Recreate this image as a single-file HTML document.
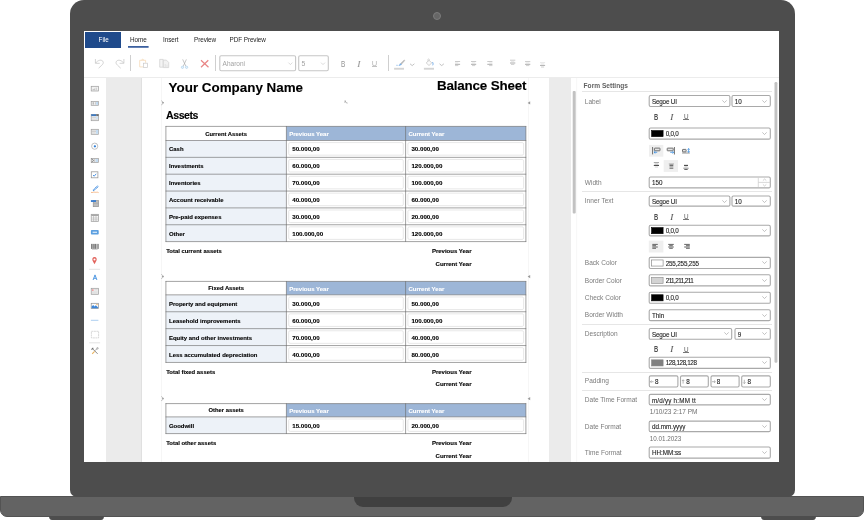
<!DOCTYPE html><html><head><meta charset="utf-8"><title>Form Designer</title><style>
*{box-sizing:border-box;margin:0;padding:0}
html,body{width:864px;height:520px;overflow:hidden;background:#fff}
body{position:relative;font-family:"Liberation Sans",sans-serif;color:#000}
.a{position:absolute}
.t{position:absolute;white-space:nowrap;line-height:1}
.frame{left:70px;top:0;width:725px;height:497px;background:#4d4d4d;border-radius:14px 14px 7px 7px}
.base{left:0;top:496px;width:864px;height:20.7px;background:#636363;border:1px solid #535353;border-radius:0 0 7px 7px}
.notch{left:354px;top:496.5px;width:158px;height:10.3px;background:#404040;border-radius:0 0 9px 9px}
.foot{top:516px;height:4px;background:#4d4d4d}
.cam{left:432.6px;top:12px;width:8.2px;height:8.2px;border-radius:50%;background:#666;border:1px solid #7c7c7c}
.lbl{position:absolute;white-space:nowrap;line-height:1;font-size:6.55px;color:#7b7b7b}
.val{position:absolute;white-space:nowrap;line-height:1;font-size:6.3px;color:#222;-webkit-text-stroke:0.1px #222}
.sep{position:absolute;height:1px;background:#e6e6e6;left:582px;width:190px}
.b{font-weight:bold;-webkit-text-stroke:0.12px currentColor}
</style></head><body><div id="root" style="position:absolute;left:0;top:0;width:864px;height:520px;will-change:transform">
<div class="a base"></div>
<div class="a foot" style="left:48.5px;width:55px;border-radius:0 0 3px 3px / 0 0 4px 4px"></div>
<div class="a foot" style="left:760.5px;width:55px;border-radius:0 0 3px 3px / 0 0 4px 4px"></div>
<div class="a frame"></div>
<div class="a notch"></div>
<div class="a cam"></div>
<div class="a" style="left:84px;top:31px;width:695px;height:431px;background:#fff"></div>
<div class="a" style="left:85.4px;top:32px;width:35.8px;height:15.6px;background:#1f4a8b"></div>
<div class="t" style="left:98.6px;top:36.7px;font-size:6.3px;color:#fff">File</div>
<div class="t" style="left:130px;top:36.6px;font-size:6.35px;letter-spacing:-0.08px;color:#262626">Home</div>
<div class="t" style="left:163px;top:36.6px;font-size:6.35px;letter-spacing:-0.08px;color:#262626">Insert</div>
<div class="t" style="left:194px;top:36.6px;font-size:6.35px;letter-spacing:-0.08px;color:#262626">Preview</div>
<div class="t" style="left:229.6px;top:36.6px;font-size:6.35px;letter-spacing:-0.08px;color:#262626">PDF Preview</div>
<svg class="a" style="left:0;top:0" width="864" height="520" viewBox="0 0 864 520"><rect x="128" y="46.1" width="20.6" height="1.6" fill="#274f95"/></svg>
<div class="a" style="left:84px;top:77px;width:695px;height:1px;background:#ececec"></div>
<div class="a" style="left:130.2px;top:55.3px;width:0.8px;height:16px;background:#cfcfcf"></div>
<div class="a" style="left:215.2px;top:55.3px;width:0.8px;height:16px;background:#cfcfcf"></div>
<div class="a" style="left:388.2px;top:55.3px;width:0.8px;height:16px;background:#cfcfcf"></div>
<svg class="a" style="left:0;top:0" width="864" height="520" viewBox="0 0 864 520"><rect x="219.80" y="55.70" width="75.80" height="15.00" rx="1.4" fill="#fff" stroke="#c6c6c6" stroke-width="1.1"/><rect x="298.70" y="55.70" width="29.60" height="15.00" rx="1.4" fill="#fff" stroke="#c6c6c6" stroke-width="1.1"/><rect x="649.20" y="95.50" width="80.70" height="11.00" rx="1.4" fill="#fff" stroke="#a9a9a9" stroke-width="1.1"/><rect x="732.00" y="95.50" width="38.30" height="11.00" rx="1.4" fill="#fff" stroke="#a9a9a9" stroke-width="1.1"/><rect x="649.20" y="128.00" width="121.10" height="11.10" rx="1.4" fill="#fff" stroke="#a9a9a9" stroke-width="1.1"/><rect x="649.20" y="177.00" width="121.10" height="10.90" rx="1.4" fill="#fff" stroke="#a9a9a9" stroke-width="1.1"/><rect x="649.20" y="196.00" width="80.70" height="10.10" rx="1.4" fill="#fff" stroke="#a9a9a9" stroke-width="1.1"/><rect x="732.00" y="196.00" width="38.30" height="10.10" rx="1.4" fill="#fff" stroke="#a9a9a9" stroke-width="1.1"/><rect x="649.20" y="225.30" width="121.10" height="10.60" rx="1.4" fill="#fff" stroke="#a9a9a9" stroke-width="1.1"/><rect x="649.20" y="257.40" width="121.10" height="11.10" rx="1.4" fill="#fff" stroke="#a9a9a9" stroke-width="1.1"/><rect x="649.20" y="274.80" width="121.10" height="11.10" rx="1.4" fill="#fff" stroke="#a9a9a9" stroke-width="1.1"/><rect x="649.20" y="292.20" width="121.10" height="11.10" rx="1.4" fill="#fff" stroke="#a9a9a9" stroke-width="1.1"/><rect x="649.20" y="309.80" width="121.10" height="10.80" rx="1.4" fill="#fff" stroke="#a9a9a9" stroke-width="1.1"/><rect x="649.20" y="328.50" width="82.50" height="10.80" rx="1.4" fill="#fff" stroke="#a9a9a9" stroke-width="1.1"/><rect x="735.00" y="328.50" width="35.30" height="10.80" rx="1.4" fill="#fff" stroke="#a9a9a9" stroke-width="1.1"/><rect x="649.20" y="357.30" width="121.10" height="11.10" rx="1.4" fill="#fff" stroke="#a9a9a9" stroke-width="1.1"/><rect x="649.30" y="375.90" width="28.60" height="11.10" rx="1.4" fill="#fff" stroke="#a9a9a9" stroke-width="1.1"/><rect x="680.50" y="375.90" width="27.80" height="11.10" rx="1.4" fill="#fff" stroke="#a9a9a9" stroke-width="1.1"/><rect x="711.00" y="375.90" width="28.10" height="11.10" rx="1.4" fill="#fff" stroke="#a9a9a9" stroke-width="1.1"/><rect x="741.70" y="375.90" width="28.60" height="11.10" rx="1.4" fill="#fff" stroke="#a9a9a9" stroke-width="1.1"/><rect x="649.20" y="394.40" width="121.10" height="10.50" rx="1.4" fill="#fff" stroke="#a9a9a9" stroke-width="1.1"/><rect x="649.20" y="421.10" width="121.10" height="10.50" rx="1.4" fill="#fff" stroke="#a9a9a9" stroke-width="1.1"/><rect x="649.20" y="447.00" width="121.10" height="11.10" rx="1.4" fill="#fff" stroke="#a9a9a9" stroke-width="1.1"/></svg>
<div class="t" style="left:222.6px;top:60.6px;font-size:6.5px;color:#a2a2a2">Aharoni</div>
<div class="t" style="left:301.6px;top:60.6px;font-size:6.8px;color:#a2a2a2">5</div>
<div class="t" style="left:340.70px;top:60px;font-size:9.2px;color:#939393;transform:scaleX(0.7);transform-origin:0 0">B</div>
<div class="t" style="left:356.90px;top:60px;font-size:8.8px;color:#9a9a9a;font-style:italic;font-family:'Liberation Serif',serif;transform:scaleX(1.25);transform-origin:0 0">I</div>
<div class="t" style="left:371.80px;top:60px;font-size:7.6px;color:#b8b8b8">U</div>
<div class="a" style="left:371.8px;top:66.4px;width:5.5px;height:0.9px;background:#c2c2c2"></div>
<svg class="a" style="left:0;top:0" width="864" height="520" viewBox="0 0 864 520"><path d="M95.4 59 V63.3 H99.7 M95.6 63.1 C97.6 60.2 101.2 59.3 102.8 61.2 C103.9 62.6 103 64 101.8 65.2 L98.6 68.2" fill="none" stroke="#c6c6c6" stroke-width="0.75"/><path d="M123.9 59 V63.3 H119.6 M123.7 63.1 C121.7 60.2 118.1 59.3 116.5 61.2 C115.4 62.6 116.3 64 117.5 65.2 L120.7 68.2" fill="none" stroke="#c6c6c6" stroke-width="0.75"/><path d="M143 66.9 H139.7 V60.3 H145.6 V62.8 M141.6 60.3 C141.6 58.9 143.7 58.9 143.7 60.3" fill="none" stroke="#f5d9b8" stroke-width="0.8"/><rect x="143.6" y="63.2" width="3.9" height="4.4" fill="#fff" stroke="#c9c9c9" stroke-width="0.7"/><path d="M159.7 59.4 H163.2 V67.2 H159.7 Z" fill="#f4f4f4" stroke="#d0d0d0" stroke-width="0.7"/><path d="M163.3 60.1 H166.4 L168.7 62.4 V67.6 H163.3 Z" fill="#f2f2f2" stroke="#cecece" stroke-width="0.7"/><path d="M165.2 64 V67.4 M167 64.8 V67.4" stroke="#d6d6d6" stroke-width="0.6"/><path d="M182.7 59.4 L185.9 66.3 M186.4 59.4 L183.2 66.3" stroke="#a8a8a8" stroke-width="0.65" fill="none"/><circle cx="182.5" cy="67.3" r="1.15" fill="#e8f2fb" stroke="#9fc9ea" stroke-width="0.6"/><circle cx="186.6" cy="67.3" r="1.15" fill="#e8f2fb" stroke="#9fc9ea" stroke-width="0.6"/><path d="M201 60.3 L208.5 67.2 M208.3 60.2 L201 67.3" stroke="#e98686" stroke-width="1.25" fill="none"/><path d="M288.4 62.6 L290.4 64.6 L292.4 62.6" fill="none" stroke="#c4c4c4" stroke-width="0.6"/><path d="M321 62.6 L323 64.6 L325 62.6" fill="none" stroke="#c4c4c4" stroke-width="0.6"/><path d="M401.2 64.6 L404.9 60.4 L404.2 59.9 L400.4 63.7 Z" fill="#b5b5b5" stroke="#b5b5b5" stroke-width="0.5"/><path d="M399 65.6 L401.3 64.7 L400.4 63.7 Z" fill="#74ade9" stroke="#74ade9" stroke-width="0.6"/><path d="M396 65.3 H398.2" stroke="#9cc4ee" stroke-width="0.7"/><rect x="394.1" y="67.8" width="9.9" height="1.9" fill="#d4d4d4"/><path d="M410 63.8 L412.2 65.6 L414.4 63.8" fill="none" stroke="#a2a2a2" stroke-width="0.65"/><path d="M426.2 62.9 L429 60.3 L431.8 62.9 L429 65.5 Z" fill="#fbfbfb" stroke="#c4c4c4" stroke-width="0.75"/><path d="M427.9 61.6 V59.5 C427.9 58.6 429.3 58.6 429.3 59.5 V60.6" fill="none" stroke="#c8c8c8" stroke-width="0.65"/><path d="M432.5 62.1 C433.2 63.2 433.2 64.4 432.7 65.3" fill="none" stroke="#74ade9" stroke-width="1.0"/><rect x="423.9" y="67.8" width="10.1" height="1.9" fill="#d4d4d4"/><path d="M439.5 63.8 L441.7 65.6 L443.9 63.8" fill="none" stroke="#a2a2a2" stroke-width="0.65"/><path d="M455 61.5 H460.1" stroke="#c4c4c4" stroke-width="0.9"/><path d="M455 62.9 H458.3" stroke="#dedede" stroke-width="0.7"/><path d="M455 64.3 H460.1" stroke="#aeaeae" stroke-width="1.0"/><path d="M455 65.6 H458.3" stroke="#c4c4c4" stroke-width="0.8"/><path d="M471 61.5 H476.2" stroke="#c4c4c4" stroke-width="0.9"/><path d="M472 62.9 H475.2" stroke="#dedede" stroke-width="0.7"/><path d="M471 64.3 H476.2" stroke="#aeaeae" stroke-width="1.0"/><path d="M472 65.6 H475.2" stroke="#c4c4c4" stroke-width="0.8"/><path d="M487.3 61.5 H492.4" stroke="#c4c4c4" stroke-width="0.9"/><path d="M489.1 62.9 H492.4" stroke="#dedede" stroke-width="0.7"/><path d="M487.3 64.3 H492.4" stroke="#aeaeae" stroke-width="1.0"/><path d="M489.1 65.6 H492.4" stroke="#c4c4c4" stroke-width="0.8"/><path d="M510 60.2 H515.3" stroke="#c4c4c4" stroke-width="0.9"/><path d="M511 61.6 H514.3" stroke="#dedede" stroke-width="0.7"/><path d="M510 63 H515.3" stroke="#aeaeae" stroke-width="1.0"/><path d="M511 64.4 H514.3" stroke="#c4c4c4" stroke-width="0.8"/><path d="M525 61.6 H530.3" stroke="#c4c4c4" stroke-width="0.9"/><path d="M526 63 H529.3" stroke="#dedede" stroke-width="0.7"/><path d="M525 64.3 H530.3" stroke="#aeaeae" stroke-width="1.0"/><path d="M526 65.6 H529.3" stroke="#c4c4c4" stroke-width="0.8"/><path d="M540 62.7 H545.1" stroke="#dedede" stroke-width="0.8"/><path d="M541 64 H544.1" stroke="#dedede" stroke-width="0.7"/><path d="M540 65.4 H545.1" stroke="#aeaeae" stroke-width="1.0"/><path d="M541 67 H544.1" stroke="#c4c4c4" stroke-width="0.8"/></svg>
<div class="a" style="left:106.3px;top:78px;width:35.5px;height:384px;background:#ebebeb;border-right:1px solid #e0e0e0"></div>
<div class="a" style="left:161.3px;top:78px;width:0.7px;height:384px;background:#f6f6f6"></div>
<div class="a" style="left:528.4px;top:78px;width:0.7px;height:384px;background:#f6f6f6"></div>
<div class="a" style="left:548.6px;top:78px;width:22.6px;height:384px;background:#ebebeb"></div>
<svg class="a" style="left:0;top:0" width="864" height="520" viewBox="0 0 864 520"><rect x="572.7" y="91" width="3" height="122.5" rx="1" fill="#c2c2c2"/><rect x="774.5" y="82" width="2.9" height="280.7" rx="1.2" fill="#c2c2c2"/><path d="M576.6 78 V462" stroke="#f4f4f4" stroke-width="0.7"/></svg>
<div class="t b" style="left:168.6px;top:80.6px;font-size:13.4px">Your Company Name</div>
<div class="t b" style="left:437px;top:78.6px;font-size:13.4px;letter-spacing:-0.18px">Balance Sheet</div>
<div class="t b" style="left:166px;top:110px;font-size:10.6px;letter-spacing:-0.45px">Assets</div>
<svg class="a" style="left:0;top:0" width="864" height="520" viewBox="0 0 864 520"><rect x="165.9" y="126.4" width="120.49999999999997" height="14.1" fill="#fff"/><rect x="286.4" y="126.4" width="239.5" height="14.1" fill="#9db6d7"/><rect x="165.9" y="140.5" width="120.49999999999997" height="101.10000000000001" fill="#edf2f8"/><rect x="286.4" y="140.5" width="239.5" height="101.10000000000001" fill="#fff"/><rect x="288.70" y="142.60" width="114.60" height="12.55" rx="1.4" fill="#fff" stroke="#dedede" stroke-width="0.7"/><rect x="407.90" y="142.60" width="115.70" height="12.55" rx="1.4" fill="#fff" stroke="#dedede" stroke-width="0.7"/><rect x="288.70" y="159.45" width="114.60" height="12.55" rx="1.4" fill="#fff" stroke="#dedede" stroke-width="0.7"/><rect x="407.90" y="159.45" width="115.70" height="12.55" rx="1.4" fill="#fff" stroke="#dedede" stroke-width="0.7"/><rect x="288.70" y="176.30" width="114.60" height="12.55" rx="1.4" fill="#fff" stroke="#dedede" stroke-width="0.7"/><rect x="407.90" y="176.30" width="115.70" height="12.55" rx="1.4" fill="#fff" stroke="#dedede" stroke-width="0.7"/><rect x="288.70" y="193.15" width="114.60" height="12.55" rx="1.4" fill="#fff" stroke="#dedede" stroke-width="0.7"/><rect x="407.90" y="193.15" width="115.70" height="12.55" rx="1.4" fill="#fff" stroke="#dedede" stroke-width="0.7"/><rect x="288.70" y="210.00" width="114.60" height="12.55" rx="1.4" fill="#fff" stroke="#dedede" stroke-width="0.7"/><rect x="407.90" y="210.00" width="115.70" height="12.55" rx="1.4" fill="#fff" stroke="#dedede" stroke-width="0.7"/><rect x="288.70" y="226.85" width="114.60" height="12.55" rx="1.4" fill="#fff" stroke="#dedede" stroke-width="0.7"/><rect x="407.90" y="226.85" width="115.70" height="12.55" rx="1.4" fill="#fff" stroke="#dedede" stroke-width="0.7"/><path d="M165.59 126.40 H526.21" stroke="#6a6a6a" stroke-width="0.62"/><path d="M165.59 140.50 H526.21" stroke="#6a6a6a" stroke-width="0.62"/><path d="M165.59 157.35 H526.21" stroke="#6a6a6a" stroke-width="0.62"/><path d="M165.59 174.20 H526.21" stroke="#6a6a6a" stroke-width="0.62"/><path d="M165.59 191.05 H526.21" stroke="#6a6a6a" stroke-width="0.62"/><path d="M165.59 207.90 H526.21" stroke="#6a6a6a" stroke-width="0.62"/><path d="M165.59 224.75 H526.21" stroke="#6a6a6a" stroke-width="0.62"/><path d="M165.59 241.60 H526.21" stroke="#6a6a6a" stroke-width="0.62"/><path d="M165.90 126.09 V241.91" stroke="#6a6a6a" stroke-width="0.62"/><path d="M286.40 126.09 V241.91" stroke="#6a6a6a" stroke-width="0.62"/><path d="M405.60 126.09 V241.91" stroke="#6a6a6a" stroke-width="0.62"/><path d="M525.90 126.09 V241.91" stroke="#6a6a6a" stroke-width="0.62"/></svg>
<div class="t b" style="left:165.90px;top:132px;font-size:5.85px;width:120.49999999999997px;text-align:center">Current Assets</div>
<div class="t b" style="left:289.20px;top:131px;font-size:6px;color:#fff">Previous Year</div>
<div class="t b" style="left:408.40px;top:131px;font-size:6px;color:#fff">Current Year</div>
<div class="t b" style="left:169.00px;top:147px;font-size:5.95px;">Cash</div>
<div class="t b" style="left:292.20px;top:146px;font-size:6.2px;">50.000,00</div>
<div class="t b" style="left:411.40px;top:146px;font-size:6.2px;">30.000,00</div>
<div class="t b" style="left:169.00px;top:164px;font-size:5.95px;">Investments</div>
<div class="t b" style="left:292.20px;top:163px;font-size:6.2px;">60.000,00</div>
<div class="t b" style="left:411.40px;top:163px;font-size:6.2px;">120.000,00</div>
<div class="t b" style="left:169.00px;top:181px;font-size:5.95px;">Inventories</div>
<div class="t b" style="left:292.20px;top:180px;font-size:6.2px;">70.000,00</div>
<div class="t b" style="left:411.40px;top:180px;font-size:6.2px;">100.000,00</div>
<div class="t b" style="left:169.00px;top:198px;font-size:5.95px;">Account receivable</div>
<div class="t b" style="left:292.20px;top:197px;font-size:6.2px;">40.000,00</div>
<div class="t b" style="left:411.40px;top:197px;font-size:6.2px;">60.000,00</div>
<div class="t b" style="left:169.00px;top:215px;font-size:5.95px;">Pre-paid expenses</div>
<div class="t b" style="left:292.20px;top:214px;font-size:6.2px;">30.000,00</div>
<div class="t b" style="left:411.40px;top:214px;font-size:6.2px;">20.000,00</div>
<div class="t b" style="left:169.00px;top:232px;font-size:5.95px;">Other</div>
<div class="t b" style="left:292.20px;top:231px;font-size:6.2px;">100.000,00</div>
<div class="t b" style="left:411.40px;top:231px;font-size:6.2px;">120.000,00</div>
<div class="t b" style="left:166.20px;top:249px;font-size:5.9px;">Total current assets</div>
<div class="t b" style="right:392.50px;top:248px;font-size:6px;">Previous Year</div>
<div class="t b" style="right:392.50px;top:261px;font-size:6px;">Current Year</div>
<svg class="a" style="left:0;top:0" width="864" height="520" viewBox="0 0 864 520"><rect x="165.9" y="281.4" width="120.49999999999997" height="13.45" fill="#fff"/><rect x="286.4" y="281.4" width="239.5" height="13.45" fill="#9db6d7"/><rect x="165.9" y="294.84999999999997" width="120.49999999999997" height="67.6" fill="#edf2f8"/><rect x="286.4" y="294.84999999999997" width="239.5" height="67.6" fill="#fff"/><rect x="288.70" y="296.95" width="114.60" height="12.60" rx="1.4" fill="#fff" stroke="#dedede" stroke-width="0.7"/><rect x="407.90" y="296.95" width="115.70" height="12.60" rx="1.4" fill="#fff" stroke="#dedede" stroke-width="0.7"/><rect x="288.70" y="313.85" width="114.60" height="12.60" rx="1.4" fill="#fff" stroke="#dedede" stroke-width="0.7"/><rect x="407.90" y="313.85" width="115.70" height="12.60" rx="1.4" fill="#fff" stroke="#dedede" stroke-width="0.7"/><rect x="288.70" y="330.75" width="114.60" height="12.60" rx="1.4" fill="#fff" stroke="#dedede" stroke-width="0.7"/><rect x="407.90" y="330.75" width="115.70" height="12.60" rx="1.4" fill="#fff" stroke="#dedede" stroke-width="0.7"/><rect x="288.70" y="347.65" width="114.60" height="12.60" rx="1.4" fill="#fff" stroke="#dedede" stroke-width="0.7"/><rect x="407.90" y="347.65" width="115.70" height="12.60" rx="1.4" fill="#fff" stroke="#dedede" stroke-width="0.7"/><path d="M165.59 281.40 H526.21" stroke="#6a6a6a" stroke-width="0.62"/><path d="M165.59 294.85 H526.21" stroke="#6a6a6a" stroke-width="0.62"/><path d="M165.59 311.75 H526.21" stroke="#6a6a6a" stroke-width="0.62"/><path d="M165.59 328.65 H526.21" stroke="#6a6a6a" stroke-width="0.62"/><path d="M165.59 345.55 H526.21" stroke="#6a6a6a" stroke-width="0.62"/><path d="M165.59 362.45 H526.21" stroke="#6a6a6a" stroke-width="0.62"/><path d="M165.90 281.09 V362.76" stroke="#6a6a6a" stroke-width="0.62"/><path d="M286.40 281.09 V362.76" stroke="#6a6a6a" stroke-width="0.62"/><path d="M405.60 281.09 V362.76" stroke="#6a6a6a" stroke-width="0.62"/><path d="M525.90 281.09 V362.76" stroke="#6a6a6a" stroke-width="0.62"/></svg>
<div class="t b" style="left:165.90px;top:286px;font-size:5.85px;width:120.49999999999997px;text-align:center">Fixed Assets</div>
<div class="t b" style="left:289.20px;top:286px;font-size:6px;color:#fff">Previous Year</div>
<div class="t b" style="left:408.40px;top:286px;font-size:6px;color:#fff">Current Year</div>
<div class="t b" style="left:169.00px;top:302px;font-size:5.95px;">Property and equipment</div>
<div class="t b" style="left:292.20px;top:301px;font-size:6.2px;">30.000,00</div>
<div class="t b" style="left:411.40px;top:301px;font-size:6.2px;">50.000,00</div>
<div class="t b" style="left:169.00px;top:319px;font-size:5.95px;">Leasehold improvements</div>
<div class="t b" style="left:292.20px;top:318px;font-size:6.2px;">60.000,00</div>
<div class="t b" style="left:411.40px;top:318px;font-size:6.2px;">100.000,00</div>
<div class="t b" style="left:169.00px;top:336px;font-size:5.95px;">Equity and other investments</div>
<div class="t b" style="left:292.20px;top:335px;font-size:6.2px;">70.000,00</div>
<div class="t b" style="left:411.40px;top:335px;font-size:6.2px;">40.000,00</div>
<div class="t b" style="left:169.00px;top:353px;font-size:5.95px;">Less accumulated depreciation</div>
<div class="t b" style="left:292.20px;top:352px;font-size:6.2px;">40.000,00</div>
<div class="t b" style="left:411.40px;top:352px;font-size:6.2px;">80.000,00</div>
<div class="t b" style="left:166.20px;top:370px;font-size:5.9px;">Total fixed assets</div>
<div class="t b" style="right:392.50px;top:369px;font-size:6px;">Previous Year</div>
<div class="t b" style="right:392.50px;top:381px;font-size:6px;">Current Year</div>
<svg class="a" style="left:0;top:0" width="864" height="520" viewBox="0 0 864 520"><rect x="165.9" y="403.6" width="120.49999999999997" height="13.3" fill="#fff"/><rect x="286.4" y="403.6" width="239.5" height="13.3" fill="#9db6d7"/><rect x="165.9" y="416.90000000000003" width="120.49999999999997" height="16.7" fill="#edf2f8"/><rect x="286.4" y="416.90000000000003" width="239.5" height="16.7" fill="#fff"/><rect x="288.70" y="419.00" width="114.60" height="12.40" rx="1.4" fill="#fff" stroke="#dedede" stroke-width="0.7"/><rect x="407.90" y="419.00" width="115.70" height="12.40" rx="1.4" fill="#fff" stroke="#dedede" stroke-width="0.7"/><path d="M165.59 403.60 H526.21" stroke="#6a6a6a" stroke-width="0.62"/><path d="M165.59 416.90 H526.21" stroke="#6a6a6a" stroke-width="0.62"/><path d="M165.59 433.60 H526.21" stroke="#6a6a6a" stroke-width="0.62"/><path d="M165.90 403.29 V433.91" stroke="#6a6a6a" stroke-width="0.62"/><path d="M286.40 403.29 V433.91" stroke="#6a6a6a" stroke-width="0.62"/><path d="M405.60 403.29 V433.91" stroke="#6a6a6a" stroke-width="0.62"/><path d="M525.90 403.29 V433.91" stroke="#6a6a6a" stroke-width="0.62"/></svg>
<div class="t b" style="left:165.90px;top:408px;font-size:5.85px;width:120.49999999999997px;text-align:center">Other assets</div>
<div class="t b" style="left:289.20px;top:408px;font-size:6px;color:#fff">Previous Year</div>
<div class="t b" style="left:408.40px;top:408px;font-size:6px;color:#fff">Current Year</div>
<div class="t b" style="left:169.00px;top:424px;font-size:5.95px;">Goodwill</div>
<div class="t b" style="left:292.20px;top:423px;font-size:6.2px;">15.000,00</div>
<div class="t b" style="left:411.40px;top:423px;font-size:6.2px;">20.000,00</div>
<div class="t b" style="left:166.20px;top:441px;font-size:5.9px;">Total other assets</div>
<div class="t b" style="right:392.50px;top:440px;font-size:6px;">Previous Year</div>
<div class="t b" style="right:392.50px;top:453px;font-size:6px;">Current Year</div>
<svg class="a" style="left:0;top:0" width="864" height="520" viewBox="0 0 864 520"><path d="M161.2 100.6 L163.9 102.8 L161.2 105.0" fill="none" stroke="#9a9a9a" stroke-width="0.6"/><path d="M162.2 102.1 L164 102.8 L162.2 103.5 Z" fill="#8a8a8a"/><path d="M530.2 101.3 L527.6 102.89999999999999 L530.2 104.5 Z" fill="#9a9a9a"/><path d="M161.2 274.3 L163.9 276.5 L161.2 278.7" fill="none" stroke="#9a9a9a" stroke-width="0.6"/><path d="M162.2 275.8 L164 276.5 L162.2 277.2 Z" fill="#8a8a8a"/><path d="M530.2 275.0 L527.6 276.6 L530.2 278.2 Z" fill="#9a9a9a"/><path d="M161.2 396.40000000000003 L163.9 398.6 L161.2 400.8" fill="none" stroke="#9a9a9a" stroke-width="0.6"/><path d="M162.2 397.90000000000003 L164 398.6 L162.2 399.3 Z" fill="#8a8a8a"/><path d="M530.2 397.1 L527.6 398.70000000000005 L530.2 400.3 Z" fill="#9a9a9a"/><path d="M345 100.2 L345.9 102.6 L347.6 103.1 M344 102.2 L345.6 101.6" fill="none" stroke="#9a9a9a" stroke-width="0.7"/></svg>
<div class="t" style="left:583.60px;top:83px;font-size:6.6px;color:#626262;font-weight:bold">Form Settings</div>
<div class="sep" style="top:91.2px"></div>
<div class="lbl" style="left:584.80px;top:99px;font-size:6.55px;">Label</div>
<svg class="a" style="left:721.9px;top:99.5px" width="5" height="3" viewBox="0 0 5 3"><path d="M0.3 0.4 L2.5 2.5 L4.7 0.4" fill="none" stroke="#9a9a9a" stroke-width="0.6"/></svg>
<div class="val" style="left:651.90px;top:99px;font-size:6.3px;letter-spacing:-0.18px">Segoe UI</div>
<svg class="a" style="left:762.3px;top:99.5px" width="5" height="3" viewBox="0 0 5 3"><path d="M0.3 0.4 L2.5 2.5 L4.7 0.4" fill="none" stroke="#9a9a9a" stroke-width="0.6"/></svg>
<div class="val" style="left:734.70px;top:99px;font-size:6.3px;">10</div>
<div class="t" style="left:654.10px;top:113px;font-size:8.6px;color:#505050;font-weight:bold;transform:scaleX(0.68);transform-origin:0 0">B</div>
<div class="t" style="left:669.50px;top:113px;font-size:8.8px;color:#5a5a5a;font-style:italic;font-family:'Liberation Serif',serif;transform:scaleX(1.2);transform-origin:0 0">I</div>
<div class="t" style="left:683.70px;top:113px;font-size:7.3px;color:#5a5a5a;transform:scaleX(0.87);transform-origin:0 0">U</div>
<div class="a" style="left:683.2px;top:119.4px;width:5.5px;height:0.7px;background:#777"></div>
<svg class="a" style="left:762.3px;top:132.05px" width="5" height="3" viewBox="0 0 5 3"><path d="M0.3 0.4 L2.5 2.5 L4.7 0.4" fill="none" stroke="#9a9a9a" stroke-width="0.6"/></svg>
<svg class="a" style="left:0;top:0" width="864" height="520" viewBox="0 0 864 520"><rect x="651.60" y="130.55" width="11.5" height="6.1" fill="#000" stroke="#000" stroke-width="0.6"/></svg>
<div class="val" style="left:665.70px;top:131px;font-size:6.3px;letter-spacing:-0.22px">0,0,0</div>
<div class="lbl" style="left:584.80px;top:180px;font-size:6.55px;">Width</div>
<div class="val" style="left:651.90px;top:180px;font-size:6.3px;">150</div>
<div class="sep" style="top:191.2px"></div>
<div class="lbl" style="left:584.80px;top:198px;font-size:6.55px;">Inner Text</div>
<svg class="a" style="left:721.9px;top:199.55px" width="5" height="3" viewBox="0 0 5 3"><path d="M0.3 0.4 L2.5 2.5 L4.7 0.4" fill="none" stroke="#9a9a9a" stroke-width="0.6"/></svg>
<div class="val" style="left:651.90px;top:199px;font-size:6.3px;letter-spacing:-0.18px">Segoe UI</div>
<svg class="a" style="left:762.3px;top:199.55px" width="5" height="3" viewBox="0 0 5 3"><path d="M0.3 0.4 L2.5 2.5 L4.7 0.4" fill="none" stroke="#9a9a9a" stroke-width="0.6"/></svg>
<div class="val" style="left:734.70px;top:199px;font-size:6.3px;">10</div>
<div class="t" style="left:654.10px;top:213px;font-size:8.6px;color:#505050;font-weight:bold;transform:scaleX(0.68);transform-origin:0 0">B</div>
<div class="t" style="left:669.50px;top:213px;font-size:8.8px;color:#5a5a5a;font-style:italic;font-family:'Liberation Serif',serif;transform:scaleX(1.2);transform-origin:0 0">I</div>
<div class="t" style="left:683.70px;top:213px;font-size:7.3px;color:#5a5a5a;transform:scaleX(0.87);transform-origin:0 0">U</div>
<div class="a" style="left:683.2px;top:219.20000000000002px;width:5.5px;height:0.7px;background:#777"></div>
<svg class="a" style="left:762.3px;top:229.10000000000002px" width="5" height="3" viewBox="0 0 5 3"><path d="M0.3 0.4 L2.5 2.5 L4.7 0.4" fill="none" stroke="#9a9a9a" stroke-width="0.6"/></svg>
<svg class="a" style="left:0;top:0" width="864" height="520" viewBox="0 0 864 520"><rect x="651.60" y="227.60" width="11.5" height="6.1" fill="#000" stroke="#000" stroke-width="0.6"/></svg>
<div class="val" style="left:665.70px;top:228px;font-size:6.3px;letter-spacing:-0.22px">0,0,0</div>
<div class="lbl" style="left:584.80px;top:260px;font-size:6.55px;">Back Color</div>
<svg class="a" style="left:762.3px;top:261.45px" width="5" height="3" viewBox="0 0 5 3"><path d="M0.3 0.4 L2.5 2.5 L4.7 0.4" fill="none" stroke="#9a9a9a" stroke-width="0.6"/></svg>
<svg class="a" style="left:0;top:0" width="864" height="520" viewBox="0 0 864 520"><rect x="651.60" y="259.95" width="11.5" height="6.1" fill="#fff" stroke="#7a7a7a" stroke-width="0.6"/></svg>
<div class="val" style="left:665.70px;top:261px;font-size:6.3px;letter-spacing:-0.17px">255,255,255</div>
<div class="lbl" style="left:584.80px;top:278px;font-size:6.55px;">Border Color</div>
<svg class="a" style="left:762.3px;top:278.85px" width="5" height="3" viewBox="0 0 5 3"><path d="M0.3 0.4 L2.5 2.5 L4.7 0.4" fill="none" stroke="#9a9a9a" stroke-width="0.6"/></svg>
<svg class="a" style="left:0;top:0" width="864" height="520" viewBox="0 0 864 520"><rect x="651.60" y="277.35" width="11.5" height="6.1" fill="#d3d3d3" stroke="#8a8a8a" stroke-width="0.6"/></svg>
<div class="val" style="left:665.70px;top:278px;font-size:6.3px;letter-spacing:-0.55px">211,211,211</div>
<div class="lbl" style="left:584.80px;top:295px;font-size:6.55px;">Check Color</div>
<svg class="a" style="left:762.3px;top:296.25px" width="5" height="3" viewBox="0 0 5 3"><path d="M0.3 0.4 L2.5 2.5 L4.7 0.4" fill="none" stroke="#9a9a9a" stroke-width="0.6"/></svg>
<svg class="a" style="left:0;top:0" width="864" height="520" viewBox="0 0 864 520"><rect x="651.60" y="294.75" width="11.5" height="6.1" fill="#000" stroke="#000" stroke-width="0.6"/></svg>
<div class="val" style="left:665.70px;top:295px;font-size:6.3px;letter-spacing:-0.22px">0,0,0</div>
<div class="lbl" style="left:584.80px;top:312px;font-size:6.55px;">Border Width</div>
<svg class="a" style="left:762.3px;top:313.70000000000005px" width="5" height="3" viewBox="0 0 5 3"><path d="M0.3 0.4 L2.5 2.5 L4.7 0.4" fill="none" stroke="#9a9a9a" stroke-width="0.6"/></svg>
<div class="val" style="left:651.90px;top:313px;font-size:6.3px;">Thin</div>
<div class="sep" style="top:324px"></div>
<div class="lbl" style="left:584.80px;top:331px;font-size:6.55px;">Description</div>
<svg class="a" style="left:723.7px;top:332.4px" width="5" height="3" viewBox="0 0 5 3"><path d="M0.3 0.4 L2.5 2.5 L4.7 0.4" fill="none" stroke="#9a9a9a" stroke-width="0.6"/></svg>
<div class="val" style="left:651.90px;top:332px;font-size:6.3px;letter-spacing:-0.18px">Segoe UI</div>
<svg class="a" style="left:762.3px;top:332.4px" width="5" height="3" viewBox="0 0 5 3"><path d="M0.3 0.4 L2.5 2.5 L4.7 0.4" fill="none" stroke="#9a9a9a" stroke-width="0.6"/></svg>
<div class="val" style="left:737.70px;top:332px;font-size:6.3px;">9</div>
<div class="t" style="left:654.10px;top:345px;font-size:8.6px;color:#505050;font-weight:bold;transform:scaleX(0.68);transform-origin:0 0">B</div>
<div class="t" style="left:669.50px;top:345px;font-size:8.8px;color:#5a5a5a;font-style:italic;font-family:'Liberation Serif',serif;transform:scaleX(1.2);transform-origin:0 0">I</div>
<div class="t" style="left:683.70px;top:346px;font-size:7.3px;color:#5a5a5a;transform:scaleX(0.87);transform-origin:0 0">U</div>
<div class="a" style="left:683.2px;top:351.9px;width:5.5px;height:0.7px;background:#777"></div>
<svg class="a" style="left:762.3px;top:361.35px" width="5" height="3" viewBox="0 0 5 3"><path d="M0.3 0.4 L2.5 2.5 L4.7 0.4" fill="none" stroke="#9a9a9a" stroke-width="0.6"/></svg>
<svg class="a" style="left:0;top:0" width="864" height="520" viewBox="0 0 864 520"><rect x="651.60" y="359.85" width="11.5" height="6.1" fill="#808080" stroke="#808080" stroke-width="0.6"/></svg>
<div class="val" style="left:665.70px;top:360px;font-size:6.3px;letter-spacing:-0.38px">128,128,128</div>
<div class="sep" style="top:371.5px"></div>
<div class="lbl" style="left:584.80px;top:378px;font-size:6.55px;">Padding</div>
<div class="val" style="left:655.10px;top:379px;font-size:6.3px;">8</div>
<div class="val" style="left:686.30px;top:379px;font-size:6.3px;">8</div>
<div class="val" style="left:716.80px;top:379px;font-size:6.3px;">8</div>
<div class="val" style="left:747.50px;top:379px;font-size:6.3px;">8</div>
<svg class="a" style="left:0;top:0" width="864" height="520" viewBox="0 0 864 520"><path d="M650.3 381.7 H653.6 M651.5 380.5 L650.3 381.7 L651.5 382.9" fill="none" stroke="#9a9a9a" stroke-width="0.7"/><path d="M683.1 379.8 V383.59999999999997 M681.9 381.0 L683.1 379.8 L684.3000000000001 381.0" fill="none" stroke="#9a9a9a" stroke-width="0.7"/><path d="M712.0 381.7 H715.3000000000001 M714.1 380.5 L715.3000000000001 381.7 L714.1 382.9" fill="none" stroke="#9a9a9a" stroke-width="0.7"/><path d="M744.3000000000001 379.8 V383.59999999999997 M743.1 382.4 L744.3000000000001 383.59999999999997 L745.5000000000001 382.4" fill="none" stroke="#9a9a9a" stroke-width="0.7"/></svg>
<div class="sep" style="top:390.4px"></div>
<div class="lbl" style="left:584.80px;top:397px;font-size:6.55px;">Date Time Format</div>
<svg class="a" style="left:762.3px;top:398.15px" width="5" height="3" viewBox="0 0 5 3"><path d="M0.3 0.4 L2.5 2.5 L4.7 0.4" fill="none" stroke="#9a9a9a" stroke-width="0.6"/></svg>
<div class="val" style="left:651.90px;top:398px;font-size:6.3px;letter-spacing:0.2px">m/d/yy h:MM tt</div>
<div class="lbl" style="left:649.80px;top:409px;font-size:6.5px;color:#6e6e6e">1/10/23 2:17 PM</div>
<div class="lbl" style="left:584.80px;top:424px;font-size:6.55px;">Date Format</div>
<svg class="a" style="left:762.3px;top:424.85px" width="5" height="3" viewBox="0 0 5 3"><path d="M0.3 0.4 L2.5 2.5 L4.7 0.4" fill="none" stroke="#9a9a9a" stroke-width="0.6"/></svg>
<div class="val" style="left:651.90px;top:424px;font-size:6.3px;">dd.mm.yyyy</div>
<div class="lbl" style="left:649.80px;top:436px;font-size:6.3px;color:#6e6e6e">10.01.2023</div>
<div class="lbl" style="left:584.80px;top:450px;font-size:6.55px;">Time Format</div>
<svg class="a" style="left:762.3px;top:451.05px" width="5" height="3" viewBox="0 0 5 3"><path d="M0.3 0.4 L2.5 2.5 L4.7 0.4" fill="none" stroke="#9a9a9a" stroke-width="0.6"/></svg>
<div class="val" style="left:651.90px;top:450px;font-size:6.3px;">HH:MM:ss</div>
<svg class="a" style="left:0;top:0" width="864" height="520" viewBox="0 0 864 520"><rect x="649" y="144.9" width="14.299999999999955" height="11.799999999999983" fill="#efefef"/><path d="M652.6 147 V154.4" stroke="#666" stroke-width="0.95"/><rect x="654.4" y="148.1" width="5.6" height="2.7" rx="0.5" fill="#e4e4e4" stroke="#5a5a5a" stroke-width="0.85"/><path d="M654 152.3 H657.2 M655.3 151.2 L654 152.3 L655.3 153.4" fill="none" stroke="#3a8ee0" stroke-width="0.8"/><path d="M674.4 147 V154.5" stroke="#666" stroke-width="0.95"/><rect x="667.2" y="148.1" width="6" height="2.7" rx="0.5" fill="#e4e4e4" stroke="#5a5a5a" stroke-width="0.85"/><path d="M670.2 152.3 H673.6 M672.4 151.2 L673.7 152.3 L672.4 153.4" fill="none" stroke="#3a8ee0" stroke-width="0.8"/><rect x="682.5" y="149.4" width="3.6" height="2.5" rx="0.4" fill="#e4e4e4" stroke="#5a5a5a" stroke-width="0.85"/><path d="M682.1 153 H689.8" stroke="#777" stroke-width="0.8"/><path d="M688.6 148.6 V152.3 M687.6 149.7 L688.6 148.5 L689.6 149.7 M687.6 151.2 L688.6 152.4 L689.6 151.2" fill="none" stroke="#3a8ee0" stroke-width="0.75"/><rect x="663.7" y="160.1" width="14.299999999999955" height="11.800000000000011" fill="#efefef"/><path d="M653.8 162.6 H659" stroke="#888" stroke-width="0.8"/><path d="M654.8 164 H658" stroke="#aaa" stroke-width="0.6"/><path d="M653.8 165.4 H659" stroke="#444" stroke-width="1.1"/><path d="M654.8 167 H658" stroke="#b5b5b5" stroke-width="0.6"/><path d="M668.8 163.9 H674" stroke="#999" stroke-width="0.7"/><path d="M669.5 165.2 H673.3" stroke="#444" stroke-width="1.1"/><path d="M669.5 166.7 H673.3" stroke="#888" stroke-width="0.7"/><path d="M669.5 168.2 H673.3" stroke="#555" stroke-width="0.9"/><path d="M684 165.4 H688" stroke="#444" stroke-width="1.1"/><path d="M684.5 166.8 H687.5" stroke="#aaa" stroke-width="0.6"/><path d="M683.3 168.2 H688.7" stroke="#777" stroke-width="0.8"/><path d="M684.3 169.5 H687.7" stroke="#555" stroke-width="0.9"/><rect x="648.8" y="240.6" width="14.600000000000023" height="11.900000000000006" fill="#efefef"/><path d="M652.3 244.4 H657.8" stroke="#555" stroke-width="0.9"/><path d="M652.3 245.7 H656" stroke="#555" stroke-width="0.9"/><path d="M652.3 247 H657.8" stroke="#555" stroke-width="0.9"/><path d="M652.3 248.3 H656" stroke="#555" stroke-width="0.9"/><path d="M668.2 244.4 H673.8" stroke="#555" stroke-width="0.9"/><path d="M669.2 245.7 H672.8" stroke="#555" stroke-width="0.9"/><path d="M668.2 247 H673.8" stroke="#555" stroke-width="0.9"/><path d="M669.2 248.3 H672.8" stroke="#555" stroke-width="0.9"/><path d="M684.2 244.4 H689.8" stroke="#555" stroke-width="0.9"/><path d="M686 245.7 H689.8" stroke="#555" stroke-width="0.9"/><path d="M684.2 247 H689.8" stroke="#555" stroke-width="0.9"/><path d="M686 248.3 H689.8" stroke="#555" stroke-width="0.9"/><path d="M758.3 177.6 V187.2 M758.3 182.4 H770.3" stroke="#c8c8c8" stroke-width="0.7" fill="none"/><path d="M762.9 180.6 L764.6 179 L766.3 180.6 M762.9 184.4 L764.6 186 L766.3 184.4" stroke="#b0b0b0" stroke-width="0.6" fill="none"/></svg>
<svg class="a" style="left:0;top:0" width="864" height="520" viewBox="0 0 864 520"><rect x="91.20" y="86.30" width="7.20" height="4.70" rx="0" fill="#f2f2f2" stroke="#9c9c9c" stroke-width="0.7"/><path d="M92.60 89.60 L95.00 89.60" stroke="#b0b0b0" stroke-width="0.7" fill="none"/><path d="M96.20 87.60 L96.20 90.20" stroke="#aaa" stroke-width="0.6" fill="none"/><path d="M94.40 88.20 L94.40 90.20" stroke="#c4c4c4" stroke-width="0.6" fill="none"/><rect x="91.20" y="101.40" width="7.20" height="3.90" rx="0" fill="#f4f4f4" stroke="#9c9c9c" stroke-width="0.7"/><path d="M93.20 102.20 L93.20 104.60" stroke="#8a8a8a" stroke-width="0.8" fill="none"/><path d="M95.40 102.20 L95.40 104.60" stroke="#b5b5b5" stroke-width="0.7" fill="none"/><rect x="96.20" y="102.00" width="1.80" height="2.80" rx="0" fill="#bcd7f0"/><rect x="91.20" y="114.40" width="7.20" height="6.30" rx="0" fill="#f0f0f0" stroke="#9c9c9c" stroke-width="0.7"/><rect x="91.20" y="114.20" width="5.00" height="1.90" rx="0" fill="#3f79bd"/><rect x="96.20" y="114.20" width="2.40" height="1.90" rx="0" fill="#6f6f6f"/><path d="M92.00 117.60 L97.80 117.60" stroke="#c0c0c0" stroke-width="0.6" fill="none"/><path d="M92.00 119.20 L97.80 119.20" stroke="#c8c8c8" stroke-width="0.6" fill="none"/><rect x="96.00" y="116.60" width="2.00" height="2.40" rx="0" fill="#cfe3f5"/><rect x="91.20" y="129.30" width="7.20" height="5.00" rx="0" fill="#ececec" stroke="#9c9c9c" stroke-width="0.7"/><path d="M91.60 131.20 L96.00 131.20" stroke="#bdbdbd" stroke-width="0.9" fill="none"/><rect x="96.00" y="130.00" width="2.20" height="3.80" rx="0" fill="#c4dcf2"/><path d="M92.00 133.00 L95.60 133.00" stroke="#cfcfcf" stroke-width="0.7" fill="none"/><circle cx="94.7" cy="146.2" r="3.1" fill="#fff" stroke="#a8a8a8" stroke-width="0.7"/><circle cx="94.9" cy="146.3" r="1.15" fill="#2f7fd6"/><rect x="91.20" y="158.40" width="7.20" height="4.20" rx="0" fill="#eeeeee" stroke="#9c9c9c" stroke-width="0.7"/><path d="M91.40 158.80 L93.80 160.50" stroke="#777" stroke-width="0.8" fill="none"/><path d="M91.40 162.20 L93.80 160.50" stroke="#777" stroke-width="0.8" fill="none"/><rect x="95.60" y="159.00" width="2.40" height="3.00" rx="0" fill="#c4dcf2"/><path d="M94.60 158.60 L94.60 162.40" stroke="#b0b0b0" stroke-width="0.6" fill="none"/><rect x="91.30" y="171.80" width="6.60" height="6.00" rx="0" fill="#fff" stroke="#9a9a9a" stroke-width="0.8"/><path d="M93 175 L94.2 176.2 L96.2 173.8" fill="none" stroke="#3d8be0" stroke-width="0.9"/><path d="M93.2 190.6 L98.2 185.9" stroke="#3d8be0" stroke-width="1.7" stroke-dasharray="1.1 0.5" fill="none"/><path d="M91 192.3 C92.4 193.2 93.4 191.6 94.8 192.2 C96 192.7 97 191.7 98.6 192.6" fill="none" stroke="#f0a060" stroke-width="0.7"/><rect x="93.20" y="200.40" width="5.40" height="6.30" rx="0" fill="#bdbdbd" stroke="#8c8c8c" stroke-width="0.6"/><rect x="90.90" y="200.10" width="5.10" height="1.90" rx="0" fill="#3d7fcf"/><path d="M93.40 203.20 L98.40 203.20" stroke="#9a9a9a" stroke-width="0.5" fill="none"/><rect x="91.20" y="214.30" width="7.20" height="7.20" rx="0" fill="#fff" stroke="#9a9a9a" stroke-width="0.7"/><rect x="91.20" y="214.30" width="7.20" height="1.80" rx="0" fill="#a8a8a8"/><path d="M91.20 218.00 L98.40 218.00" stroke="#a8a8a8" stroke-width="0.6" fill="none"/><path d="M91.20 219.90 L98.40 219.90" stroke="#a8a8a8" stroke-width="0.6" fill="none"/><path d="M93.60 214.40 L93.60 221.40" stroke="#a8a8a8" stroke-width="0.6" fill="none"/><path d="M96.00 214.40 L96.00 221.40" stroke="#a8a8a8" stroke-width="0.6" fill="none"/><rect x="90.90" y="229.90" width="7.80" height="4.70" rx="0.8" fill="#5b9fe0"/><path d="M92.60 232.30 L97.00 232.30" stroke="#d4e7f8" stroke-width="1.3" fill="none"/><rect x="91.00" y="243.90" width="7.60" height="5.20" rx="0" fill="#e2e2e2"/><rect x="91.20" y="243.90" width="1.30" height="5.00" rx="0" fill="#6a6a6a"/><rect x="93.00" y="243.90" width="0.80" height="5.00" rx="0" fill="#808080"/><rect x="94.40" y="243.90" width="1.50" height="5.00" rx="0" fill="#707070"/><rect x="96.60" y="243.90" width="0.70" height="5.00" rx="0" fill="#8a8a8a"/><rect x="97.60" y="243.90" width="1.00" height="5.00" rx="0" fill="#747474"/><path d="M92.00 249.30 L97.60 249.30" stroke="#b5b5b5" stroke-width="0.7" fill="none"/><path d="M94.5 264.3 L92.6 260.7 C91.7 258.6 92.9 257 94.5 257 C96.1 257 97.3 258.6 96.4 260.7 Z" fill="#e2635c"/><circle cx="94.5" cy="259.5" r="1.05" fill="#fff"/><path d="M89.20 269.30 L100.10 269.30" stroke="#dadada" stroke-width="0.8" fill="none"/><path d="M93.1 280 L95 274.9 L96.9 280 M93.8 278.3 H96.2" fill="none" stroke="#4a94e0" stroke-width="0.95"/><rect x="91.20" y="288.30" width="7.30" height="6.00" rx="0" fill="#f0f0f0" stroke="#9a9a9a" stroke-width="0.7"/><rect x="92.00" y="289.20" width="1.60" height="1.80" rx="0" fill="#f0a0a0"/><path d="M94.40 289.80 L97.60 289.80" stroke="#c4c4c4" stroke-width="0.6" fill="none"/><path d="M92.00 292.00 L97.60 292.00" stroke="#c9c9c9" stroke-width="0.6" fill="none"/><path d="M92.00 293.20 L97.60 293.20" stroke="#d0d0d0" stroke-width="0.5" fill="none"/><rect x="91.20" y="303.30" width="7.30" height="5.20" rx="0" fill="#fdfdfd" stroke="#8f8f8f" stroke-width="0.7"/><path d="M91.6 308.2 V306.6 L93.2 304.9 L94.6 306.4 L95.8 305.3 L98.1 307.4 V308.2 Z" fill="#3d86d8"/><circle cx="97" cy="304.6" r="0.7" fill="#f2a541"/><path d="M90.90 320.30 L98.40 320.30" stroke="#a4c9ee" stroke-width="0.9" fill="none"/><rect x="91.4" y="331.3" width="7.2" height="6.6" fill="#fff" stroke="#c8c8c8" stroke-width="0.7" stroke-dasharray="2 0.5"/><path d="M89.20 342.80 L100.10 342.80" stroke="#dadada" stroke-width="0.8" fill="none"/><path d="M92.4 348.6 L97.6 353.8" stroke="#7a7a7a" stroke-width="0.9" fill="none"/><path d="M91.5 349.6 L93.3 347.9" stroke="#6a6a6a" stroke-width="1.1" fill="none"/><path d="M97.2 348.4 L95.2 350.6" stroke="#8a8a8a" stroke-width="0.8" fill="none"/><path d="M94.6 351.3 L92.2 353.8" stroke="#eab45e" stroke-width="1.1" fill="none"/><circle cx="97.5" cy="348.3" r="0.8" fill="none" stroke="#8a8a8a" stroke-width="0.55"/></svg>
</div></body></html>
